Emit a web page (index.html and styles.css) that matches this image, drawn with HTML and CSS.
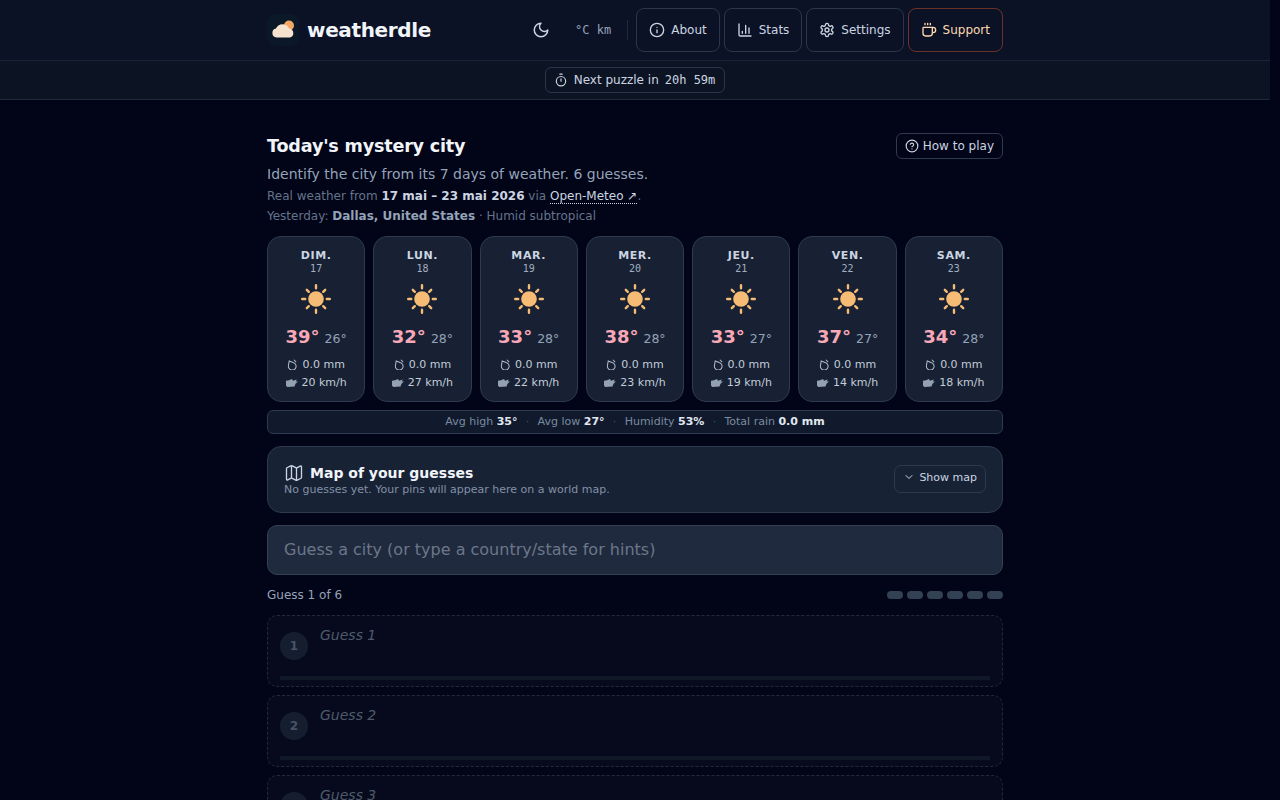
FILE: index.html
```html
<!DOCTYPE html>
<html lang="en">
<head>
    <meta charset="UTF-8">
    <meta name="viewport" content="width=device-width, initial-scale=1.0">
    <title>weatherdle</title>
    <link rel="stylesheet" href="styles.css">
</head>
<body>
    <svg class="sprites" width="0" height="0">
        <symbol id="sun" viewBox="0 0 32 32">
            <circle cx="16" cy="16" r="7.800" fill="#f6bb74"/>
            <path d="M16 2.200v3M16 26.800v3M2.200 16h3M26.800 16h3M6.800 6.800l2 2M23.200 23.200l2 2M6.800 25.200l2-2M23.200 8.800l2-2" stroke="#f6bb74" stroke-width="2.400" stroke-linecap="round"/>
        </symbol>
        <symbol id="drop" viewBox="0 0 12 12">
            <path d="M2.400 2.200 1.600 7a4.200 4.200 0 1 0 5-3.200z" fill="none" stroke="#b4bfce" stroke-width="1.100"/>
            <path d="M7.500 .8 10 3.300" stroke="#b4bfce" stroke-width="1.100"/>
        </symbol>
        <symbol id="gust" viewBox="0 0 12 8">
            <path d="M0 1.800 3 1.200 6 0 7 1.800 10.800 .4 9.800 2.600H12L9.500 4.800 8.500 7.600 1.200 8 0 6.600z" fill="#94a1b3"/>
        </symbol>
    </svg>

    <header class="topbar">
        <div class="topbar-inner">
            <a class="brand" href="#">
                <span class="brand-tile">
                    <svg width="24" height="20" viewBox="0 0 24 20">
                        <circle cx="18" cy="5.500" r="5" fill="#f2a765"/>
                        <path d="M5.500 17.500A4.500 4.500 0 0 1 5 8.600 7 7 0 0 1 18 8.500 4.600 4.600 0 0 1 19 17.500z" fill="#f6e3cf"/>
                    </svg>
                </span>
                <span class="brand-name">weatherdle</span>
            </a>
            <nav class="topnav">
                <button class="icon-btn">
                    <svg class="ico ico-lg" viewBox="0 0 24 24"><path d="M12 3a6 6 0 0 0 9 9 9 9 0 1 1-9-9z"/></svg>
                </button>
                <span class="units">°C km</span>
                <span class="nav-sep"></span>
                <a class="nav-btn" href="#">
                    <svg class="ico" viewBox="0 0 24 24"><circle cx="12" cy="12" r="10"/><path d="M12 16v-4M12 8h.01"/></svg>About
                </a>
                <a class="nav-btn" href="#">
                    <svg class="ico" viewBox="0 0 24 24"><path d="M3 3v16a2 2 0 0 0 2 2h16M8 17v-3M13 17V5M18 17V9"/></svg>Stats
                </a>
                <a class="nav-btn" href="#">
                    <svg class="ico" viewBox="0 0 24 24"><path d="M12.220 2h-.44a2 2 0 0 0-2 2v.18a2 2 0 0 1-1 1.730l-.43.25a2 2 0 0 1-2 0l-.15-.08a2 2 0 0 0-2.730.73l-.22.380a2 2 0 0 0 .73 2.730l.15.1a2 2 0 0 1 1 1.720v.51a2 2 0 0 1-1 1.740l-.15.09a2 2 0 0 0-.73 2.730l.22.380a2 2 0 0 0 2.730.73l.15-.08a2 2 0 0 1 2 0l.43.25a2 2 0 0 1 1 1.730V20a2 2 0 0 0 2 2h.44a2 2 0 0 0 2-2v-.18a2 2 0 0 1 1-1.730l.43-.25a2 2 0 0 1 2 0l.15.08a2 2 0 0 0 2.730-.73l.22-.390a2 2 0 0 0-.73-2.730l-.15-.08a2 2 0 0 1-1-1.740v-.5a2 2 0 0 1 1-1.740l.15-.09a2 2 0 0 0 .73-2.730l-.22-.380a2 2 0 0 0-2.730-.73l-.15.08a2 2 0 0 1-2 0l-.43-.25a2 2 0 0 1-1-1.730V4a2 2 0 0 0-2-2z"/><circle cx="12" cy="12" r="3"/></svg>Settings
                </a>
                <a class="nav-btn nav-support" href="#">
                    <svg class="ico" viewBox="0 0 24 24"><path d="M10 2v2M14 2v2M16 8a1 1 0 0 1 1 1v8a4 4 0 0 1-4 4H7a4 4 0 0 1-4-4V9a1 1 0 0 1 1-1h14a4 4 0 1 1 0 8h-1M6 2v2"/></svg>Support
                </a>
            </nav>
        </div>
    </header>

    <div class="subbar">
        <span class="countdown">
            <svg class="ico ico-sm" viewBox="0 0 24 24"><path d="M10 2h4M12 14v-4"/><circle cx="12" cy="14" r="8"/></svg>
            Next puzzle in <span class="mono">20h 59m</span>
        </span>
    </div>

    <main class="page">
        <section class="intro">
            <div class="intro-head">
                <h1>Today's mystery city</h1>
                <a class="howto" href="#">
                    <svg class="ico ico-sm" viewBox="0 0 24 24"><circle cx="12" cy="12" r="10"/><path d="M9.090 9a3 3 0 0 1 5.830 1c0 2-3 3-3 3M12 17h.01"/></svg>How to play
                </a>
            </div>
            <p class="lead">Identify the city from its 7 days of weather. 6 guesses.</p>
            <p class="meta">Real weather from <strong>17 mai – 23 mai 2026</strong> via <a href="#">Open-Meteo ↗</a>.</p>
            <p class="meta">Yesterday: <strong class="dim">Dallas, United States</strong> · Humid subtropical</p>
        </section>

        <section class="days">
            <article class="day">
                <div class="day-name">DIM.</div><div class="day-num">17</div>
                <svg class="sun" viewBox="0 0 32 32"><use href="#sun"/></svg>
                <div class="temps"><span class="high">39°</span><span class="low">26°</span></div>
                <div class="stat"><svg class="rain-ico"><use href="#drop"/></svg>0.0 mm</div>
                <div class="stat"><svg class="wind-ico"><use href="#gust"/></svg>20 km/h</div>
            </article>
            <article class="day">
                <div class="day-name">LUN.</div><div class="day-num">18</div>
                <svg class="sun" viewBox="0 0 32 32"><use href="#sun"/></svg>
                <div class="temps"><span class="high">32°</span><span class="low">28°</span></div>
                <div class="stat"><svg class="rain-ico"><use href="#drop"/></svg>0.0 mm</div>
                <div class="stat"><svg class="wind-ico"><use href="#gust"/></svg>27 km/h</div>
            </article>
            <article class="day">
                <div class="day-name">MAR.</div><div class="day-num">19</div>
                <svg class="sun" viewBox="0 0 32 32"><use href="#sun"/></svg>
                <div class="temps"><span class="high">33°</span><span class="low">28°</span></div>
                <div class="stat"><svg class="rain-ico"><use href="#drop"/></svg>0.0 mm</div>
                <div class="stat"><svg class="wind-ico"><use href="#gust"/></svg>22 km/h</div>
            </article>
            <article class="day">
                <div class="day-name">MER.</div><div class="day-num">20</div>
                <svg class="sun" viewBox="0 0 32 32"><use href="#sun"/></svg>
                <div class="temps"><span class="high">38°</span><span class="low">28°</span></div>
                <div class="stat"><svg class="rain-ico"><use href="#drop"/></svg>0.0 mm</div>
                <div class="stat"><svg class="wind-ico"><use href="#gust"/></svg>23 km/h</div>
            </article>
            <article class="day">
                <div class="day-name">JEU.</div><div class="day-num">21</div>
                <svg class="sun" viewBox="0 0 32 32"><use href="#sun"/></svg>
                <div class="temps"><span class="high">33°</span><span class="low">27°</span></div>
                <div class="stat"><svg class="rain-ico"><use href="#drop"/></svg>0.0 mm</div>
                <div class="stat"><svg class="wind-ico"><use href="#gust"/></svg>19 km/h</div>
            </article>
            <article class="day">
                <div class="day-name">VEN.</div><div class="day-num">22</div>
                <svg class="sun" viewBox="0 0 32 32"><use href="#sun"/></svg>
                <div class="temps"><span class="high">37°</span><span class="low">27°</span></div>
                <div class="stat"><svg class="rain-ico"><use href="#drop"/></svg>0.0 mm</div>
                <div class="stat"><svg class="wind-ico"><use href="#gust"/></svg>14 km/h</div>
            </article>
            <article class="day">
                <div class="day-name">SAM.</div><div class="day-num">23</div>
                <svg class="sun" viewBox="0 0 32 32"><use href="#sun"/></svg>
                <div class="temps"><span class="high">34°</span><span class="low">28°</span></div>
                <div class="stat"><svg class="rain-ico"><use href="#drop"/></svg>0.0 mm</div>
                <div class="stat"><svg class="wind-ico"><use href="#gust"/></svg>18 km/h</div>
            </article>
        </section>

        <div class="summary">
            <span>Avg high <b>35°</b></span><i>·</i>
            <span>Avg low <b>27°</b></span><i>·</i>
            <span>Humidity <b>53%</b></span><i>·</i>
            <span>Total rain <b>0.0 mm</b></span>
        </div>

        <section class="map-card">
            <div>
                <h2>
                    <svg class="ico ico-map" viewBox="0 0 24 24"><path d="M14.106 5.553a2 2 0 0 0 1.788 0l3.659-1.830A1 1 0 0 1 21 4.619v12.764a1 1 0 0 1-.553.894l-4.553 2.277a2 2 0 0 1-1.788 0l-4.212-2.106a2 2 0 0 0-1.788 0l-3.659 1.830A1 1 0 0 1 3 19.381V6.618a1 1 0 0 1 .553-.894l4.553-2.277a2 2 0 0 1 1.788 0zM15 5.764v15M9 3.236v15"/></svg>
                    Map of your guesses
                </h2>
                <p>No guesses yet. Your pins will appear here on a world map.</p>
            </div>
            <button class="map-toggle">
                <svg class="ico ico-xs" viewBox="0 0 24 24"><path d="m6 9 6 6 6-6"/></svg>Show map
            </button>
        </section>

        <input class="guess-input" type="text" placeholder="Guess a city (or type a country/state for hints)">

        <div class="progress">
            <span>Guess 1 of 6</span>
            <div class="pips"><span></span><span></span><span></span><span></span><span></span><span></span></div>
        </div>

        <ol class="guesses">
            <li class="guess"><span class="guess-num">1</span><em>Guess 1</em><span class="guess-bar"></span></li>
            <li class="guess"><span class="guess-num">2</span><em>Guess 2</em><span class="guess-bar"></span></li>
            <li class="guess"><span class="guess-num">3</span><em>Guess 3</em><span class="guess-bar"></span></li>
            <li class="guess"><span class="guess-num">4</span><em>Guess 4</em><span class="guess-bar"></span></li>
        </ol>
    </main>
</body>
</html>
```

FILE: styles.css
```css
* {
    box-sizing: border-box;
}

html {
    background-color: #020417;
}

body {
    margin: 0 10px 0 0;
    font-family: "DejaVu Sans", sans-serif;
    color: #e2e8f0;
}

a {
    color: inherit;
    text-decoration: none;
}

.sprites {
    position: absolute;
}

.ico {
    width: 16px;
    height: 16px;
    fill: none;
    stroke: currentColor;
    stroke-width: 2;
    stroke-linecap: round;
    stroke-linejoin: round;
    flex: none;
}

.ico-lg {
    width: 18px;
    height: 18px;
}

.ico-sm {
    width: 14px;
    height: 14px;
}

.ico-xs {
    width: 12px;
    height: 12px;
}

.ico-map {
    width: 20px;
    height: 20px;
    stroke-width: 1.6;
    color: #cbd5e1;
}

/* top bar */
.topbar {
    background-color: #0c1226;
    border-bottom: 1px solid #1b2436;
    height: 61px;
}

.topbar-inner {
    width: 736px;
    height: 60px;
    margin: 0 auto;
    display: flex;
    align-items: center;
    justify-content: space-between;
}

.brand {
    display: flex;
    align-items: center;
    gap: 8px;
}

.brand-tile {
    width: 32px;
    height: 32px;
    border-radius: 8px;
    background-color: #0a1828;
    display: flex;
    align-items: center;
    justify-content: center;
}

.brand-name {
    font-size: 20px;
    font-weight: 700;
    letter-spacing: -0.35px;
    color: #f1f5f9;
}

.topnav {
    display: flex;
    align-items: center;
    gap: 4px;
}

.icon-btn {
    width: 36px;
    height: 36px;
    display: flex;
    align-items: center;
    justify-content: center;
    background: none;
    border: 0;
    color: #cbd5e1;
    padding: 0;
}

.units {
    font-family: "DejaVu Sans Mono", monospace;
    font-size: 12px;
    color: #94a3b8;
    padding: 0 8px 0 12px;
}

.nav-sep {
    width: 1px;
    height: 20px;
    background-color: #1e293b;
    margin: 0 4px;
}

.nav-btn {
    height: 44px;
    padding: 0 12px;
    display: flex;
    align-items: center;
    gap: 6px;
    font-size: 12px;
    color: #cbd5e1;
    border: 1px solid #2b3648;
    border-radius: 8px;
}

.nav-support {
    color: #fcd9b0;
    border-color: #6b3327;
}

/* countdown bar */
.subbar {
    height: 39px;
    background-color: #0c1424;
    border-bottom: 1px solid #1f2937;
    display: flex;
    align-items: center;
    justify-content: center;
}

.countdown {
    height: 26px;
    padding: 0 9px 0 8px;
    display: flex;
    align-items: center;
    gap: 6px;
    font-size: 12px;
    color: #cbd5e1;
    border: 1px solid #2b3648;
    border-radius: 6px;
}

.mono {
    font-family: "DejaVu Sans Mono", monospace;
}

/* main column */
.page {
    width: 736px;
    margin: 0 auto;
    padding-top: 33px;
}

.intro-head {
    display: flex;
    align-items: center;
    justify-content: space-between;
    height: 26px;
    margin-bottom: 5px;
}

h1 {
    margin: 0;
    font-size: 17.600px;
    font-weight: 700;
    letter-spacing: -0.2px;
    color: #f1f5f9;
}

.howto {
    height: 26px;
    padding: 0 8px;
    display: flex;
    align-items: center;
    gap: 4px;
    font-size: 12px;
    color: #cbd5e1;
    border: 1px solid #2f3a4d;
    border-radius: 6px;
}

.lead {
    margin: 0 0 2px;
    font-size: 14px;
    line-height: 20px;
    color: #94a3b8;
}

.meta {
    margin: 0;
    font-size: 12px;
    line-height: 20px;
    color: #64748b;
}

.meta strong {
    color: #cbd5e1;
}

.meta strong.dim {
    color: #94a3b8;
}

.meta a {
    color: #cbd5e1;
    border-bottom: 1px dotted #cbd5e1;
}

/* forecast cards */
.days {
    display: grid;
    grid-template-columns: repeat(7, 1fr);
    gap: 8px;
    margin-top: 10px;
}

.day {
    height: 166px;
    padding-top: 12px;
    text-align: center;
    background-color: #172133;
    border: 1px solid #2e3a4d;
    border-radius: 14px;
}

.day-name {
    font-size: 11px;
    line-height: 13px;
    font-weight: 700;
    letter-spacing: 0.6px;
    color: #cbd5e1;
}

.day-num {
    font-family: "DejaVu Sans Mono", monospace;
    font-size: 10px;
    line-height: 13px;
    color: #a3afc0;
}

.sun {
    display: block;
    width: 32px;
    height: 32px;
    margin: 8px auto 11px;
}

.temps {
    display: flex;
    justify-content: center;
    align-items: baseline;
    gap: 5px;
    height: 24px;
    margin-bottom: 6px;
}

.high {
    font-size: 18px;
    font-weight: 700;
    color: #f9a8b8;
}

.low {
    font-size: 12.500px;
    color: #94a3b8;
}

.stat {
    font-size: 11px;
    line-height: 17.500px;
    color: #c3ccd9;
}

.rain-ico {
    width: 11px;
    height: 11px;
    margin-right: 4px;
    vertical-align: -2px;
}

.wind-ico {
    width: 12px;
    height: 8px;
    margin-right: 4px;
    vertical-align: -1px;
}

/* averages strip */
.summary {
    height: 24px;
    margin-top: 8px;
    padding-bottom: 1px;
    display: flex;
    align-items: center;
    justify-content: center;
    gap: 8.300px;
    font-size: 11px;
    color: #7b8aa0;
    background-color: #101a2c;
    border: 1px solid #2e3a4d;
    border-radius: 6px;
}

.summary b {
    color: #e2e8f0;
}

.summary i {
    font-style: normal;
    color: #475569;
}

/* map card */
.map-card {
    height: 67px;
    margin-top: 12px;
    padding: 0 16px;
    display: flex;
    align-items: center;
    justify-content: space-between;
    background-color: #182235;
    border: 1px solid #2e3a4d;
    border-radius: 14px;
}

.map-card h2 {
    margin: 0;
    display: flex;
    align-items: center;
    gap: 6px;
    font-size: 14px;
    line-height: 18px;
    font-weight: 700;
    color: #f1f5f9;
}

.map-card p {
    margin: 0;
    font-size: 11px;
    line-height: 13px;
    color: #8291a6;
}

.map-toggle {
    height: 28px;
    margin-bottom: 2px;
    padding: 0 8px 3px;
    display: flex;
    align-items: center;
    gap: 4px;
    font-family: inherit;
    font-size: 11px;
    color: #cbd5e1;
    background: none;
    border: 1px solid #2f3a4d;
    border-radius: 7px;
}

/* guess box */
.guess-input {
    display: block;
    width: 100%;
    height: 50px;
    margin-top: 12px;
    padding: 0 16px 2px;
    font-family: inherit;
    font-size: 16px;
    color: #e2e8f0;
    background-color: #1f2a3e;
    border: 1px solid #334155;
    border-radius: 10px;
    outline: none;
}

.guess-input::placeholder {
    color: #6b7789;
}

.progress {
    display: flex;
    align-items: center;
    justify-content: space-between;
    height: 20px;
    margin-top: 10px;
    font-size: 12px;
    color: #94a3b8;
}

.pips {
    display: flex;
    gap: 4px;
}

.pips span {
    width: 16px;
    height: 8px;
    border-radius: 4px;
    background-color: #334155;
}

/* empty guess rows */
.guesses {
    list-style: none;
    margin: 10px 0 0;
    padding: 0;
    display: flex;
    flex-direction: column;
    gap: 8px;
}

.guess {
    position: relative;
    height: 72px;
    padding-left: 52px;
    padding-top: 9px;
    background-color: #060a1c;
    border: 1px dashed #202a3b;
    border-radius: 10px;
}

.guess em {
    font-size: 14px;
    line-height: 17px;
    color: #4e5a6c;
}

.guess-num {
    position: absolute;
    left: 12px;
    top: 16px;
    width: 28px;
    height: 28px;
    display: flex;
    align-items: center;
    justify-content: center;
    font-size: 12px;
    font-weight: 700;
    color: #475569;
    background-color: #151e2e;
    border-radius: 50%;
}

.guess-bar {
    position: absolute;
    left: 12px;
    right: 12px;
    bottom: 6px;
    height: 4px;
    background-color: #101827;
}
```
